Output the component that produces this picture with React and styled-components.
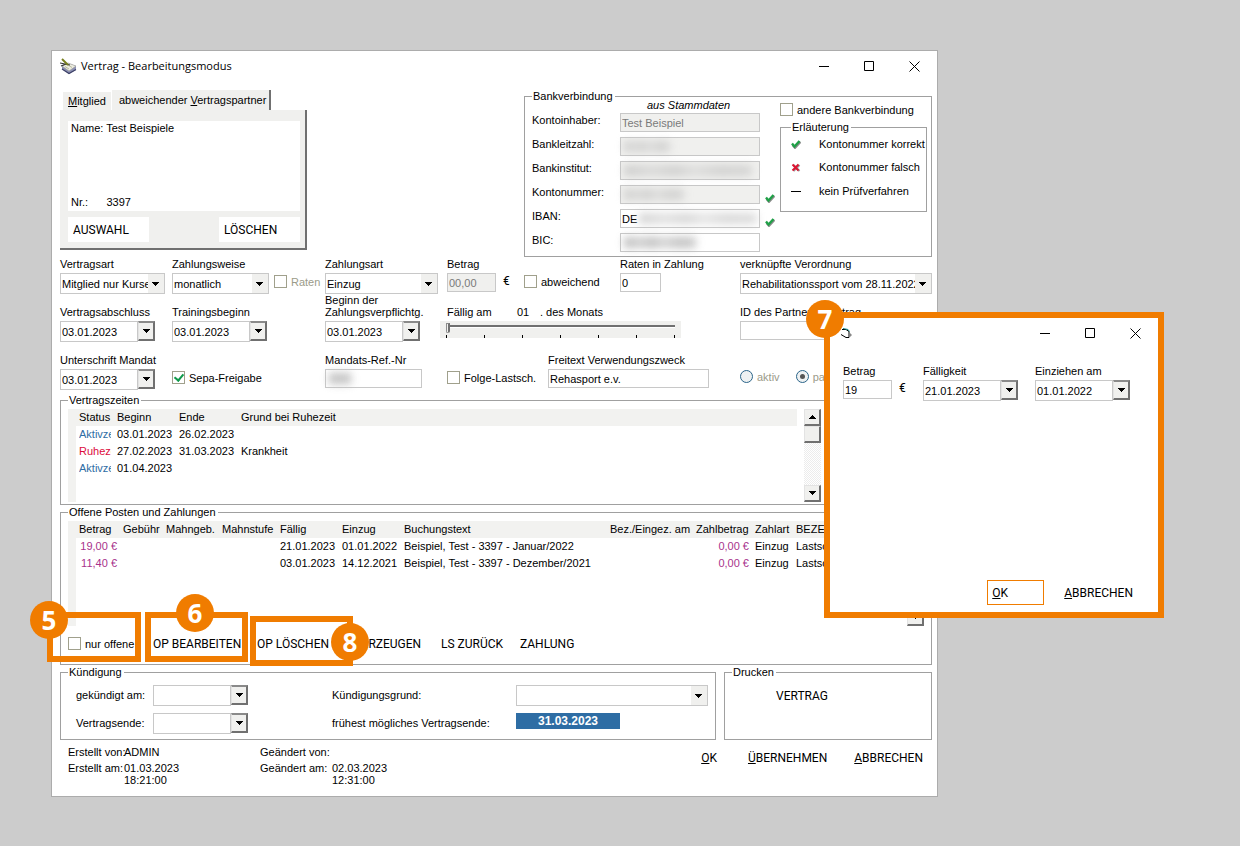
import React from 'react';
import styled, { createGlobalStyle, css } from 'styled-components';

const GlobalStyle = createGlobalStyle`
    * {
        box-sizing: border-box;
    }
    body {
        margin: 0;
        background: #cccccc;
        color: #000;
        font: 11px/12px "Liberation Sans", Arial, sans-serif;
    }
    input, select, button {
        margin: 0;
        padding: 0;
        border: 0;
        border-radius: 0;
        background: none;
        color: inherit;
        font: inherit;
    }
`;

const orange = '#f07c00';
const line = '#a0a0a0';
const face = '#f0f0ee';

const Desktop = styled.main`
    min-height: 100vh;
    padding: 50px 302px 50px 51px;
`;

const Window = styled.section`
    position: relative;
    min-width: 880px;
    background: #fff;
    border: 1px solid #acacac;
`;

const TitleBar = styled.header`
    display: flex;
    align-items: center;
    height: 30px;
    padding-left: 8px;
    gap: 4px;
`;

const Title = styled.h1`
    flex: 1;
    margin: 0;
    font: 11px/16px "Open Sans", "Noto Sans", sans-serif;
`;

const CaptionButtons = styled.div`
    display: flex;
    margin-left: auto;
`;

const CaptionButton = styled.button`
    display: grid;
    place-items: center;
    width: 45px;
    height: 28px;
`;

const Body = styled.div`
    padding: 9px 5px 6px 8px;
`;

const TopRow = styled.div`
    display: flex;
    justify-content: space-between;
    align-items: flex-start;
`;

const Tabs = styled.div`
    display: flex;
    align-items: flex-end;
    gap: 1px;
    padding-left: 3px;
`;

const Tab = styled.button`
    height: ${p => (p.$active ? 20 : 18)}px;
    padding: ${p => (p.$active ? '0 3px 0 7px' : '0 5px')};
    background: ${face};
    border-right: ${p => (p.$active ? '2px solid #707070' : '0')};
    white-space: nowrap;
`;

const Partner = styled.div`
    width: 247px;
`;

const TabPanel = styled.div`
    height: 140px;
    padding: 11px 5px 7px 8px;
    background: ${face};
    border-right: 2px solid #707070;
    border-bottom: 2px solid #707070;
`;

const PartnerCard = styled.div`
    display: flex;
    flex-direction: column;
    justify-content: space-between;
    height: 90px;
    padding: 1px 4px 3px 3px;
    background: #fff;
`;

const PartnerButtons = styled.div`
    display: flex;
    justify-content: space-between;
    margin-top: 6px;
`;

const TextButton = styled.button`
    font: 12px/16px Roboto, sans-serif;
    white-space: nowrap;
    text-align: left;
    ${p => p.$boxed && css`
        width: ${p.$boxed}px;
        height: 25px;
        padding-left: 4px;
        background: #fff;
        border: 1px solid ${p.$focus ? orange : '#fff'};
    `}
`;

const Group = styled.fieldset`
    min-width: 0;
    margin: 0;
    padding: ${p => p.$pad || '0 7px'};
    border: 1px solid ${line};
    ${p => p.$width && `width: ${p.$width}px;`}
    ${p => p.$grow && 'flex: 1;'}
`;

const Legend = styled.legend`
    padding: 0 2px 0 1px;
    line-height: 12px;
`;

const BankGrid = styled.div`
    display: grid;
    grid-template-columns: 240px 1fr;
    height: 154px;
`;

const BankHeading = styled.div`
    padding-left: 115px;
    line-height: 6px;
    font-style: italic;
`;

const BankRows = styled.div`
    display: grid;
    gap: 5px;
    padding-top: 5px;
`;

const BankRow = styled.div`
    display: grid;
    grid-template-columns: 88px 140px 12px;
    align-items: center;
    height: 19px;
    label {
        height: 18px;
    }
    > svg {
        margin: 8px 0 0 5px;
    }
`;

const Side = styled.div`
    display: grid;
    align-content: start;
    gap: 5px;
    padding: 1px 0 0 8px;
    margin-right: -3px;
`;

const LegendRow = styled.div`
    display: flex;
    align-items: center;
    gap: 18px;
    height: 24px;
    white-space: nowrap;
    &:first-of-type {
        height: 22px;
    }
`;

const InputFrame = styled.span`
    display: grid;
    width: ${p => (p.$width ? p.$width + 'px' : '100%')};
    height: 19px;
    background: ${p => (p.$disabled ? face : '#fff')};
    border: 1px solid #c8c8c8;
    > * {
        grid-area: 1 / 1;
    }
`;

const Input = styled.input`
    width: 100%;
    min-width: 0;
    padding: 0 1px;
    outline: none;
    &:disabled {
        color: #7a7a7a;
    }
`;

const Smudge = styled.span`
    align-self: center;
    height: 11px;
    width: ${p => p.$width}px;
    margin-left: ${p => p.$left || 3}px;
    background: linear-gradient(90deg, #aaa, #c4c4c4 22%, #b0b0b0 40%, #ccc 55%, #b4b4b4 75%, #bbb);
    filter: blur(4px);
    opacity: ${p => p.$strength || 0.5};
    pointer-events: none;
`;

const FormRows = styled.div`
    display: grid;
    gap: 12px;
    padding-top: 1px;
    > div {
        display: grid;
        align-content: end;
        align-items: end;
        height: 36px;
    }
`;

const RowOne = styled.div`
    grid-template-columns: 112px 102px 51px 122px 77px 96px 120px 1fr;
`;

const RowTwo = styled.div`
    grid-template-columns: 112px 153px 115px 300px 1fr;
`;

const RowThree = styled.div`
    grid-template-columns: 112px 153px 122px 101px 192px 1fr;
`;

const Field = styled.div`
    display: grid;
    gap: 3px;
    > label {
        white-space: nowrap;
    }
`;

const Control = styled.div`
    display: flex;
    align-items: flex-start;
    height: 21px;
    gap: 7px;
`;

const Unit = styled.span`
    font: 12px/17px Roboto, sans-serif;
`;

const CheckLabel = styled.label`
    display: flex;
    align-items: center;
    gap: 4px;
    height: ${p => p.$height || 17}px;
    color: ${p => (p.$muted ? '#9b9b8a' : 'inherit')};
    white-space: nowrap;
`;

const CheckBox = styled.input`
    appearance: none;
    display: grid;
    place-items: center;
    flex: none;
    width: 13px;
    height: 13px;
    background: #fff;
    border: 1px solid #a0a08c;
    &:checked::before {
        content: "";
        width: 4px;
        height: 7px;
        margin-bottom: 2px;
        border: solid #0f9a4b;
        border-width: 0 2px 2px 0;
        transform: rotate(40deg);
    }
`;

const Radio = styled.input`
    appearance: none;
    display: grid;
    place-items: center;
    flex: none;
    width: 13px;
    height: 13px;
    background: #eef1f2;
    border: 1px solid #2a6489;
    border-radius: 50%;
    &:checked::before {
        content: "";
        width: 5px;
        height: 5px;
        background: #555;
        border-radius: 50%;
    }
`;

const Radios = styled.div`
    display: flex;
    gap: 16px;
    height: 22px;
`;

const SelectFrame = styled.span`
    display: grid;
    width: ${p => (p.$width ? p.$width + 'px' : '100%')};
    height: 21px;
    border: 1px solid #c8c8c8;
    > * {
        grid-area: 1 / 1;
    }
    > svg {
        place-self: center end;
        margin-right: 5px;
        pointer-events: none;
    }
`;

const Select = styled.select`
    appearance: none;
    width: 100%;
    min-width: 0;
    padding: 0 16px 0 1px;
    overflow: hidden;
    outline: none;
    background: linear-gradient(to left, ${face} 16px, #fff 16px);
`;

const DateFrame = styled.span`
    display: flex;
    width: 95px;
    height: 21px;
`;

const DateInput = styled.input`
    width: 78px;
    padding: 0 1px;
    background: #fff;
    border: 1px solid #c8c8c8;
    outline: none;
`;

const BevelButton = styled.button`
    display: grid;
    place-items: center;
    flex: none;
    width: 17px;
    height: 17px;
    background: ${face};
    border: 1px solid #e3e3e3;
    border-right: 2px solid #707070;
    border-bottom: 2px solid #707070;
`;

const DateButton = styled(BevelButton)`
    height: 20px;
    border-top: 2px solid #8a8a8a;
`;

const DayLabel = styled.div`
    display: grid;
    grid-template-columns: 70px 23px 1fr;
    padding-left: 7px;
`;

const SliderFrame = styled.div`
    display: flex;
    flex-direction: column;
    justify-content: space-between;
    width: 241px;
    height: 17px;
    padding: 2px 6px 0 6px;
    background: ${face};
`;

const Slider = styled.input`
    appearance: none;
    width: 100%;
    height: 10px;
    background: linear-gradient(transparent 2px, #707070 2px, #707070 4px, #fff 4px, #fff 5px, transparent 5px);
    &::-webkit-slider-thumb {
        appearance: none;
        width: 4px;
        height: 10px;
        background: ${face};
        border: 1px solid #8c8c8c;
        border-right: 2px solid #707070;
        border-radius: 0 0 2px 2px;
    }
`;

const Ticks = styled.div`
    display: flex;
    justify-content: space-between;
    i {
        width: 1px;
        height: 3px;
        background: #000;
    }
`;

const ListArea = styled.div`
    display: flex;
    justify-content: space-between;
    gap: ${p => p.$gap}px;
    height: ${p => p.$height}px;
    margin-top: 3px;
`;

const ListBox = styled.div`
    flex: 1;
    min-width: 0;
    overflow: hidden;
    background: linear-gradient(to right, #f2f2f0 8px, #fff 8px);
`;

const Table = styled.table`
    width: 100%;
    table-layout: fixed;
    border-collapse: collapse;
    th, td {
        height: 17px;
        padding: 0 3px 2px 3px;
        font-weight: normal;
        text-align: left;
        white-space: nowrap;
        overflow: hidden;
    }
    th {
        background: #f2f2f0;
        overflow: visible;
    }
`;

const Cell = styled.td`
    color: ${p => p.$color || 'inherit'};
    && {
        text-align: ${p => (p.$right ? 'right' : 'left')};
    }
`;

const Clip = styled.div`
    overflow: hidden;
`;

const ScrollBar = styled.div`
    display: flex;
    flex-direction: column;
    width: 17px;
    background: repeating-conic-gradient(#ececec 0 25%, #fff 0 50%) 0 0 / 2px 2px;
    button:last-child {
        margin-top: auto;
    }
`;

const ActionRow = styled.div`
    display: grid;
    grid-template-columns: 85px 104px 88px 96px 79px 1fr;
    align-items: center;
    height: 38px;
    padding-bottom: 3px;
`;

const BottomRow = styled.div`
    display: flex;
    gap: 8px;
    margin-top: 1px;
`;

const CancelGrid = styled.div`
    display: grid;
    grid-template-columns: 77px 179px 184px 1fr;
    row-gap: 7px;
    padding: 7px 0 5px 8px;
    > label {
        line-height: 21px;
        white-space: nowrap;
    }
`;

const EndDate = styled.output`
    width: 104px;
    height: 16px;
    background: #2e6da4;
    color: #fff;
    font-size: 12px;
    font-weight: bold;
    line-height: 16px;
    text-align: center;
`;

const PrintBox = styled.div`
    padding: 10px 0 0 44px;
    height: 61px;
`;

const Footer = styled.footer`
    display: flex;
    justify-content: space-between;
    padding: 6px 9px 0 8px;
`;

const Meta = styled.dl`
    display: grid;
    grid-template-columns: 56px 136px 72px auto;
    row-gap: 4px;
    margin: 0;
    padding-bottom: 4px;
    dt, dd {
        margin: 0;
        white-space: nowrap;
    }
`;

const FooterButtons = styled.div`
    display: flex;
    align-items: flex-start;
    gap: 27px;
    padding-top: 4px;
    button:first-child {
        margin-right: 4px;
    }
`;

// annotation frames and numbers lie over the window
const Dialog = styled.section`
    position: absolute;
    top: 261px;
    right: -227px;
    width: 340px;
    height: 306px;
    display: flex;
    flex-direction: column;
    background: #fff;
    border: 6px solid ${orange};
`;

const DialogFields = styled.div`
    display: grid;
    grid-template-columns: 80px 112px 1fr;
    padding: 17px 13px 0 13px;
`;

const DialogButtons = styled.div`
    display: flex;
    align-items: center;
    gap: 20px;
    margin: auto 25px 7px auto;
`;

const Marker = styled.div`
    position: absolute;
    left: ${p => p.$x}px;
    top: ${p => p.$y}px;
    width: ${p => p.$w}px;
    height: 50px;
    border: 6px solid ${orange};
    pointer-events: none;
`;

const Badge = styled.span`
    position: absolute;
    left: ${p => p.$x}px;
    top: ${p => p.$y}px;
    width: 38px;
    height: 38px;
    border-radius: 50%;
    background: ${orange};
    color: #fff;
    font: bold 26px/38px "Noto Sans", "Open Sans", sans-serif;
    text-align: center;
`;

const Arrow = ({ up }) => (
    <svg width="7" height="4" viewBox="0 0 7 4" shapeRendering="crispEdges">
        <path d={up ? 'M0 4h7L3.5 0z' : 'M0 0h7L3.5 4z'} />
    </svg>
);

const Tick = () => (
    <svg width="10" height="9" viewBox="0 0 10 9">
        <path d="M1.5 5l2.5 3 5.5-6" fill="none" stroke="#8a8a8a" strokeWidth="2" />
        <path d="M1 3.5l2.5 3L8.5 1" fill="none" stroke="#1fa047" strokeWidth="2.4" />
    </svg>
);

const Cross = () => (
    <svg width="10" height="9" viewBox="0 0 10 9">
        <path d="M2.5 2l6 6M8.5 2l-6 6" stroke="#999" strokeWidth="2" />
        <path d="M1.5 1.5l6 6M7.5 1.5l-6 6" stroke="#dc1432" strokeWidth="2" />
    </svg>
);

const Dash = () => (
    <svg width="10" height="9" viewBox="0 0 10 9">
        <path d="M0 4.5h10" stroke="#000" />
    </svg>
);

const AppIcon = () => (
    <svg width="17" height="17" viewBox="0 0 17 17">
        <path d="M2 8l6-3 8 3v4l-7 4-7-5z" fill="#8c90b4" />
        <path d="M2 8l6-3 8 3-7 5z" fill="#ecece0" stroke="#9a9a96" strokeWidth=".6" />
        <path d="M2 11l7 4.500 7-4" fill="none" stroke="#3d4166" strokeWidth="1.200" />
        <path d="M5 8.500l4 2.500M8 7l4 2.500" stroke="#b9baa0" />
        <path d="M0 5l5 1 5 1M1 8l5-2" fill="none" stroke="#333" strokeWidth="1.200" />
        <path d="M2 1l6 6" stroke="#79801f" strokeWidth="2" />
    </svg>
);

const FormIcon = () => (
    <svg width="14" height="14" viewBox="0 0 14 14">
        <path d="M4 3.500h4l3 2v6H8l-5-3" fill="#fff" stroke="#000" />
        <path d="M5 2.500l5 1 1.500 2" fill="none" stroke="#178a8a" />
        <path d="M12 7l2 2-2 2z" fill="#888" />
    </svg>
);

const WindowControls = () => (
    <CaptionButtons>
        <CaptionButton aria-label="Minimieren">
            <svg width="11" height="11"><path d="M0 5.500h10" stroke="#000" /></svg>
        </CaptionButton>
        <CaptionButton aria-label="Maximieren">
            <svg width="11" height="11"><path d="M.5.5h9v9h-9z" fill="none" stroke="#000" /></svg>
        </CaptionButton>
        <CaptionButton aria-label="Schließen">
            <svg width="11" height="11"><path d="M.5.5l10 10M10.500.5l-10 10" stroke="#000" /></svg>
        </CaptionButton>
    </CaptionButtons>
);

const DateField = ({ id, value = '' }) => (
    <DateFrame>
        <DateInput id={id} defaultValue={value} />
        <DateButton aria-label="Datum wählen"><Arrow /></DateButton>
    </DateFrame>
);

const DropDown = ({ id, value, width }) => (
    <SelectFrame $width={width}>
        <Select id={id}><option>{value}</option></Select>
        <Arrow />
    </SelectFrame>
);

const TextField = ({ id, value = '', width, disabled, children }) => (
    <InputFrame $width={width} $disabled={disabled}>
        <Input id={id} defaultValue={value} disabled={disabled} />
        {children}
    </InputFrame>
);

const Labeled = ({ id, label, children }) => (
    <Field>
        <label htmlFor={id}>{label}</label>
        <Control>{children}</Control>
    </Field>
);

const Check = ({ label, ...rest }) => (
    <Control>
        <CheckLabel $muted={rest.disabled}>
            <CheckBox type="checkbox" {...rest} />{label}
        </CheckLabel>
    </Control>
);

const Scroll = ({ thumb }) => (
    <ScrollBar>
        <BevelButton aria-label="Nach oben"><Arrow up /></BevelButton>
        {thumb && <BevelButton aria-label="Bildlauf" />}
        <BevelButton aria-label="Nach unten"><Arrow /></BevelButton>
    </ScrollBar>
);

const bankFields = [
    { id: 'inhaber', label: 'Kontoinhaber:', value: 'Test Beispiel', disabled: true },
    { id: 'blz', label: 'Bankleitzahl:', disabled: true, smudge: 46 },
    { id: 'institut', label: 'Bankinstitut:', disabled: true, smudge: 128 },
    { id: 'konto', label: 'Kontonummer:', disabled: true, smudge: 60, tick: true },
    { id: 'iban', label: 'IBAN:', value: 'DE', smudge: 118, left: 18, tick: true },
    { id: 'bic', label: 'BIC:', smudge: 72, strength: 0.8 },
];

const periods = [
    { status: 'Aktivzeit', color: '#2e6da4', start: '03.01.2023', end: '26.02.2023', reason: '' },
    { status: 'Ruhezeit', color: '#dc0a3c', start: '27.02.2023', end: '31.03.2023', reason: 'Krankheit' },
    { status: 'Aktivzeit', color: '#2e6da4', start: '01.04.2023', end: '', reason: '' },
];

const items = [
    { amount: '19,00 €', due: '21.01.2023', debit: '01.01.2022', text: 'Beispiel, Test - 3397 - Januar/2022' },
    { amount: '11,40 €', due: '03.01.2023', debit: '14.12.2021', text: 'Beispiel, Test - 3397 - Dezember/2021' },
];

const itemWidths = [8, 44, 43, 56, 58, 62, 62, 206, 86, 59, 41];
const itemHeads = ['Betrag', 'Gebühr', 'Mahngeb.', 'Mahnstufe', 'Fällig', 'Einzug', 'Buchungstext', 'Bez./Eingez. am', 'Zahlbetrag', 'Zahlart', 'BEZEICHNUNG'];
const purple = '#a8328c';

const PartnerPanel = () => (
    <Partner>
        <Tabs>
            <Tab><u>M</u>itglied</Tab>
            <Tab $active>abweichender <u>V</u>ertragspartner</Tab>
        </Tabs>
        <TabPanel>
            <PartnerCard>
                <span>Name: Test Beispiele</span>
                <span>Nr.: &nbsp; &nbsp; &nbsp;3397</span>
            </PartnerCard>
            <PartnerButtons>
                <TextButton $boxed={81}>AUSWAHL</TextButton>
                <TextButton $boxed={81}>LÖSCHEN</TextButton>
            </PartnerButtons>
        </TabPanel>
    </Partner>
);

const BankPanel = () => (
    <Group $width={408}>
        <Legend>Bankverbindung</Legend>
        <BankGrid>
            <div>
                <BankHeading>aus Stammdaten</BankHeading>
                <BankRows>
                    {bankFields.map(f => (
                        <BankRow key={f.id}>
                            <label htmlFor={f.id}>{f.label}</label>
                            <TextField id={f.id} value={f.value} disabled={f.disabled}>
                                {f.smudge && <Smudge $width={f.smudge} $left={f.left} $strength={f.strength} />}
                            </TextField>
                            {f.tick && <Tick />}
                        </BankRow>
                    ))}
                </BankRows>
            </div>
            <Side>
                <CheckLabel $height={13}><CheckBox type="checkbox" />andere Bankverbindung</CheckLabel>
                <Group $pad="0 0 8px 10px">
                    <Legend>Erläuterung</Legend>
                    <LegendRow><Tick />Kontonummer korrekt</LegendRow>
                    <LegendRow><Cross />Kontonummer falsch</LegendRow>
                    <LegendRow><Dash />kein Prüfverfahren</LegendRow>
                </Group>
            </Side>
        </BankGrid>
    </Group>
);

const ContractForm = () => (
    <FormRows>
        <RowOne>
            <Labeled id="art" label="Vertragsart"><DropDown id="art" value="Mitglied nur Kurse" width={105} /></Labeled>
            <Labeled id="weise" label="Zahlungsweise"><DropDown id="weise" value="monatlich" width={97} /></Labeled>
            <Check label="Raten" disabled />
            <Labeled id="zahlart" label="Zahlungsart"><DropDown id="zahlart" value="Einzug" width={113} /></Labeled>
            <Labeled id="betrag" label="Betrag">
                <TextField id="betrag" value="00,00" width={49} disabled />
                <Unit>€</Unit>
            </Labeled>
            <Check label="abweichend" />
            <Labeled id="raten" label="Raten in Zahlung"><TextField id="raten" value="0" width={41} /></Labeled>
            <Labeled id="verordnung" label="verknüpfte Verordnung"><DropDown id="verordnung" value="Rehabilitationssport vom 28.11.2022" /></Labeled>
        </RowOne>
        <RowTwo>
            <Labeled id="abschluss" label="Vertragsabschluss"><DateField id="abschluss" value="03.01.2023" /></Labeled>
            <Labeled id="training" label="Trainingsbeginn"><DateField id="training" value="03.01.2023" /></Labeled>
            <Labeled id="pflicht" label={<>Beginn der<br />Zahlungsverpflichtg.</>}><DateField id="pflicht" value="03.01.2023" /></Labeled>
            <Field>
                <DayLabel>
                    <label htmlFor="tag">Fällig am</label>
                    <span>01</span>
                    <span>. des Monats</span>
                </DayLabel>
                <Control>
                    <SliderFrame>
                        <Slider id="tag" type="range" min="1" max="31" defaultValue="1" />
                        <Ticks><i /><i /><i /><i /><i /><i /><i /></Ticks>
                    </SliderFrame>
                </Control>
            </Field>
            <Labeled id="partner" label="ID des Partners / Vertrag"><TextField id="partner" width={192} /></Labeled>
        </RowTwo>
        <RowThree>
            <Labeled id="mandat" label="Unterschrift Mandat"><DateField id="mandat" value="03.01.2023" /></Labeled>
            <Check label="Sepa-Freigabe" defaultChecked />
            <Labeled id="ref" label="Mandats-Ref.-Nr">
                <TextField id="ref" width={97}><Smudge $width={22} $strength={0.9} /></TextField>
            </Labeled>
            <Check label="Folge-Lastsch." />
            <Labeled id="zweck" label="Freitext Verwendungszweck"><TextField id="zweck" value="Rehasport e.v." width={161} /></Labeled>
            <Radios>
                <CheckLabel $muted><Radio type="radio" name="aktiv" disabled />aktiv</CheckLabel>
                <CheckLabel $muted><Radio type="radio" name="aktiv" disabled defaultChecked />passiv</CheckLabel>
            </Radios>
        </RowThree>
    </FormRows>
);

const Periods = styled(Group)`
    margin: 4px 103px 0 0;
    height: 111px;
`;

const PeriodList = () => (
    <Periods>
        <Legend>Vertragszeiten</Legend>
        <ListArea $height={93} $gap={7}>
            <ListBox>
                <Table>
                    <colgroup>
                        {[8, 38, 62, 62].map((w, i) => <col key={i} width={w} />)}
                        <col />
                    </colgroup>
                    <thead>
                        <tr><th /><th>Status</th><th>Beginn</th><th>Ende</th><th>Grund bei Ruhezeit</th></tr>
                    </thead>
                    <tbody>
                        {periods.map(p => (
                            <tr key={p.start}>
                                <td />
                                <Cell $color={p.color}><Clip>{p.status}</Clip></Cell>
                                <td>{p.start}</td>
                                <td>{p.end}</td>
                                <td>{p.reason}</td>
                            </tr>
                        ))}
                    </tbody>
                </Table>
            </ListBox>
            <Scroll thumb />
        </ListArea>
    </Periods>
);

const Items = styled(Group)`
    margin-top: 1px;
`;

const ItemList = () => (
    <Items>
        <Legend>Offene Posten und Zahlungen</Legend>
        <ListArea $height={105} $gap={2}>
            <ListBox>
                <Table>
                    <colgroup>
                        {itemWidths.map((w, i) => <col key={i} width={w} />)}
                        <col />
                    </colgroup>
                    <thead>
                        <tr><th />{itemHeads.map(h => <th key={h}>{h}</th>)}</tr>
                    </thead>
                    <tbody>
                        {items.map(i => (
                            <tr key={i.due}>
                                <td />
                                <Cell $color={purple} $right>{i.amount}</Cell>
                                <td /><td /><td />
                                <td>{i.due}</td>
                                <td>{i.debit}</td>
                                <td>{i.text}</td>
                                <td />
                                <Cell $color={purple} $right>0,00 €</Cell>
                                <td>Einzug</td>
                                <td>Lastschrift</td>
                            </tr>
                        ))}
                    </tbody>
                </Table>
            </ListBox>
            <Scroll />
        </ListArea>
        <ActionRow>
            <CheckLabel><CheckBox type="checkbox" />nur offene</CheckLabel>
            <TextButton>OP BEARBEITEN</TextButton>
            <TextButton>OP LÖSCHEN</TextButton>
            <TextButton>LS ERZEUGEN</TextButton>
            <TextButton>LS ZURÜCK</TextButton>
            <TextButton>ZAHLUNG</TextButton>
        </ActionRow>
    </Items>
);

const Cancellation = () => (
    <BottomRow>
        <Group $grow>
            <Legend>Kündigung</Legend>
            <CancelGrid>
                <label htmlFor="gekuendigt">gekündigt am:</label>
                <DateField id="gekuendigt" />
                <label htmlFor="grund">Kündigungsgrund:</label>
                <DropDown id="grund" value="" />
                <label htmlFor="ende">Vertragsende:</label>
                <DateField id="ende" />
                <label htmlFor="frueh">frühest mögliches Vertragsende:</label>
                <EndDate id="frueh">31.03.2023</EndDate>
            </CancelGrid>
        </Group>
        <Group $width={208}>
            <Legend>Drucken</Legend>
            <PrintBox><TextButton>VERTRAG</TextButton></PrintBox>
        </Group>
    </BottomRow>
);

const EditDialog = () => (
    <Dialog role="dialog" aria-label="Offener Posten">
        <TitleBar>
            <FormIcon />
            <WindowControls />
        </TitleBar>
        <DialogFields>
            <Labeled id="d-betrag" label="Betrag">
                <TextField id="d-betrag" value="19" width={49} />
                <Unit>€</Unit>
            </Labeled>
            <Labeled id="d-faellig" label="Fälligkeit"><DateField id="d-faellig" value="21.01.2023" /></Labeled>
            <Labeled id="d-einzug" label="Einziehen am"><DateField id="d-einzug" value="01.01.2022" /></Labeled>
        </DialogFields>
        <DialogButtons>
            <TextButton $boxed={57} $focus><u>O</u>K</TextButton>
            <TextButton><u>A</u>BBRECHEN</TextButton>
        </DialogButtons>
    </Dialog>
);

const App = () => (
    <>
        <GlobalStyle />
        <Desktop>
            <Window>
                <TitleBar>
                    <AppIcon />
                    <Title>Vertrag - Bearbeitungsmodus</Title>
                    <WindowControls />
                </TitleBar>
                <Body>
                    <TopRow>
                        <PartnerPanel />
                        <BankPanel />
                    </TopRow>
                    <ContractForm />
                    <PeriodList />
                    <ItemList />
                    <Cancellation />
                    <Footer>
                        <Meta>
                            <dt>Erstellt von:</dt><dd>ADMIN</dd>
                            <dt>Geändert von:</dt><dd />
                            <dt>Erstellt am:</dt><dd>01.03.2023<br />18:21:00</dd>
                            <dt>Geändert am:</dt><dd>02.03.2023<br />12:31:00</dd>
                        </Meta>
                        <FooterButtons>
                            <TextButton><u>O</u>K</TextButton>
                            <TextButton><u>Ü</u>BERNEHMEN</TextButton>
                            <TextButton><u>A</u>BBRECHEN</TextButton>
                        </FooterButtons>
                    </Footer>
                </Body>
                <EditDialog />
                <Marker $x={-5} $y={561} $w={94} />
                <Marker $x={93} $y={561} $w={103} />
                <Marker $x={198} $y={565} $w={103} />
                <Badge $x={-22} $y={550}>5</Badge>
                <Badge $x={124} $y={543}>6</Badge>
                <Badge $x={754} $y={249}>7</Badge>
                <Badge $x={279} $y={572}>8</Badge>
            </Window>
        </Desktop>
    </>
);

export default App;
